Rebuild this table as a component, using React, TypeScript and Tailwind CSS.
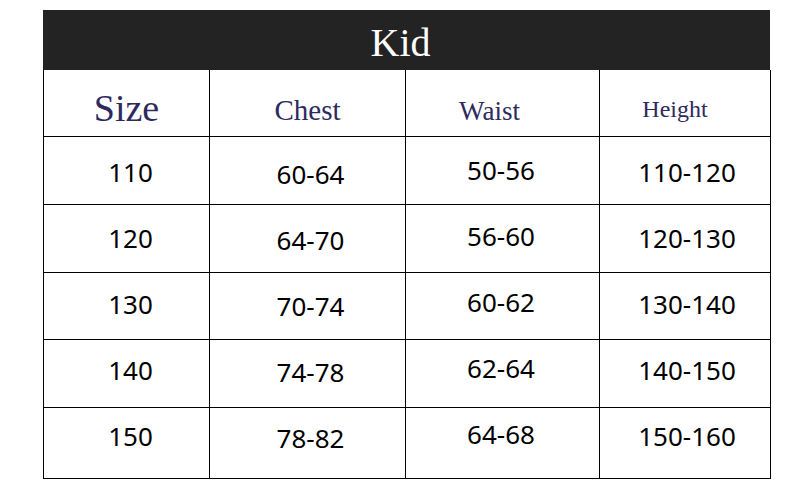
import React from "react";

const rows = [
  ["110", "60-64", "50-56", "110-120"],
  ["120", "64-70", "56-60", "120-130"],
  ["130", "70-74", "60-62", "130-140"],
  ["140", "74-78", "62-64", "140-150"],
  ["150", "78-82", "64-68", "150-160"],
];
const heights = ["h-[68px]", "h-[68px]", "h-[67px]", "h-[68px]", "h-[71px]"];
const rowPad = ["pt-[3px]", "pb-[1px]", "pb-[4px]", "pb-[7px]", "pb-[14px]"];

const cell =
  "border-r border-b border-black flex items-center justify-center font-['Noto_Sans',sans-serif] text-black text-[26px] leading-none";

export default function App() {
  return (
    <div className="w-[800px] h-[494px] bg-white pt-[10px] pl-[43px]">
      <div className="w-[727px]">
        <div className="h-[60px] bg-[#232323] flex items-center justify-center">
          <span className="text-white text-[40px] leading-none font-['Liberation_Serif',serif] mt-[5px] mr-[12px]">Kid</span>
        </div>
        <div className="grid grid-cols-[166px_196px_194px_171px] border-l border-black">
          <div className="h-[67px] border-r border-b border-black flex items-center justify-center font-['Liberation_Serif',serif] text-[#2d2a5e] text-[38px] leading-none pt-[10px]">Size</div>
          <div className="h-[67px] border-r border-b border-black flex items-center justify-center font-['Liberation_Serif',serif] text-[#2d2a5e] text-[29px] leading-none pt-[15px]">Chest</div>
          <div className="h-[67px] border-r border-b border-black flex items-center justify-center font-['Liberation_Serif',serif] text-[#2d2a5e] text-[27px] leading-none pt-[16px] pr-[26px]">Waist</div>
          <div className="h-[67px] border-r border-b border-black flex items-center justify-center font-['Liberation_Serif',serif] text-[#2d2a5e] text-[24px] leading-none pt-[11px] pr-[20px]">Height</div>
          {rows.map((r, i) => (
            <React.Fragment key={i}>
              <div className={`${heights[i]} ${rowPad[i]} ${cell}`}>
                <span className="ml-[8px]">{r[0]}</span>
              </div>
              <div className={`${heights[i]} ${rowPad[i]} ${cell}`}>
                <span className="mt-[4px] ml-[6px]">{r[1]}</span>
              </div>
              <div className={`${heights[i]} ${rowPad[i]} ${cell}`}>
                <span className="mb-[4px] mr-[3px]">{r[2]}</span>
              </div>
              <div className={`${heights[i]} ${rowPad[i]} ${cell}`}>
                <span className="ml-[4px]">{r[3]}</span>
              </div>
            </React.Fragment>
          ))}
        </div>
      </div>
    </div>
  );
}
